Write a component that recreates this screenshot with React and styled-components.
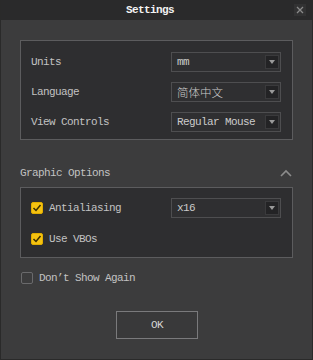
import React, { useState } from 'react';
import styled, { createGlobalStyle } from 'styled-components';

const GlobalStyle = createGlobalStyle`
  html, body {
    margin: 0;
    padding: 0;
    background: #3c3c3d;
  }
  * {
    box-sizing: border-box;
  }
`;

const mono = `"Liberation Mono", "Noto Sans CJK SC", monospace`;

const Dialog = styled.div`
  width: 313px;
  height: 360px;
  background: #3c3c3d;
  border: 1px solid #2a2a2a;
  border-top: none;
  display: flex;
  flex-direction: column;
  font-family: ${mono};
  font-size: 11px;
  letter-spacing: -0.6px;
  color: #c2c2c2;
`;

const TitleBar = styled.div`
  height: 20px;
  background: #2a2a2b;
  display: flex;
  align-items: center;
  justify-content: center;
  position: relative;
  padding-right: 13px;
  color: #f2f2f2;
  font-weight: bold;
`;

const CloseButton = styled.div`
  position: absolute;
  right: 6px;
  top: 4px;
  width: 12px;
  height: 12px;
  display: flex;
  align-items: center;
  justify-content: center;
  background: #323233;
`;

const Content = styled.div`
  padding: 20px 19px 0 19px;
  display: flex;
  flex-direction: column;
`;

const Group = styled.div`
  background: #2e2e30;
  border: 1px solid #5c5c5e;
  padding: ${(p) => p.$pad};
  display: flex;
  flex-direction: column;
  gap: ${(p) => p.$gap}px;
`;

const Row = styled.div`
  height: 20px;
  display: flex;
  align-items: center;
  justify-content: space-between;
`;

const Label = styled.span`
  line-height: 20px;
`;

const SelectBox = styled.div`
  width: 110px;
  height: 20px;
  border: 1px solid #4e4e50;
  background: #2f2f31;
  display: flex;
  align-items: center;
  justify-content: space-between;
  padding: 0 1px 0 5px;
  color: #cbcbcb;
`;

const SelectText = styled.span`
  font-size: ${(p) => (p.$cjk ? '11.5px' : '11px')};
  letter-spacing: ${(p) => (p.$cjk ? '0' : '-0.6px')};
  font-weight: ${(p) => (p.$cjk ? 300 : 'normal')};
`;

const ArrowButton = styled.div`
  width: 14px;
  height: 14px;
  background: #232325;
  border: 1px solid #3a3a3c;
  display: flex;
  align-items: center;
  justify-content: center;
`;

const SectionHeader = styled.div`
  height: 20px;
  margin: 23px 0 4px;
  display: flex;
  align-items: center;
  justify-content: space-between;
  padding-right: 1px;
`;

const CheckRow = styled.label`
  display: flex;
  align-items: center;
  gap: 6px;
  height: 20px;
  cursor: pointer;
`;

const CheckBox = styled.span`
  width: 12px;
  height: 12px;
  border-radius: 2px;
  display: flex;
  align-items: center;
  justify-content: center;
  background: ${(p) => (p.$checked ? '#f5c211' : 'transparent')};
  border: 1px solid ${(p) => (p.$checked ? '#e0ad00' : '#6a6a6c')};
  flex-shrink: 0;
`;

const FreeRow = styled.div`
  margin-top: 10px;
  padding-left: 1px;
`;

const Footer = styled.div`
  display: flex;
  justify-content: center;
  margin-top: 23px;
  padding-left: 1px;
`;

const OkButton = styled.button`
  width: 82px;
  height: 28px;
  background: #39393a;
  border: 1px solid #7a7a7c;
  color: #d6d6d6;
  font-family: ${mono};
  font-size: 11px;
  letter-spacing: -0.6px;
  cursor: pointer;
`;

const Arrow = () => (
  <svg width="6" height="4" viewBox="0 0 6 4">
    <path d="M0 0 H6 L3 4 Z" fill="#9a9a9a" />
  </svg>
);

const Select = ({ value, cjk }) => (
  <SelectBox>
    <SelectText $cjk={cjk}>{value}</SelectText>
    <ArrowButton>
      <Arrow />
    </ArrowButton>
  </SelectBox>
);

const Check = ({ checked, onToggle, children }) => (
  <CheckRow onClick={onToggle}>
    <CheckBox $checked={checked}>
      {checked && (
        <svg width="10" height="10" viewBox="0 0 10 10">
          <path d="M1.5 5 L4 7.5 L8.5 2" stroke="#3a2e00" strokeWidth="1.5" fill="none" />
        </svg>
      )}
    </CheckBox>
    <Label>{children}</Label>
  </CheckRow>
);

const App = () => {
  const [aa, setAa] = useState(true);
  const [vbo, setVbo] = useState(true);
  const [dontShow, setDontShow] = useState(false);

  return (
    <>
      <GlobalStyle />
      <Dialog>
        <TitleBar>
          Settings
          <CloseButton>
            <svg width="8" height="8" viewBox="0 0 8 8">
              <path d="M1 1 L7 7 M7 1 L1 7" stroke="#8a8a8a" strokeWidth="1.3" />
            </svg>
          </CloseButton>
        </TitleBar>
        <Content>
          <Group $pad="11px 11px 7px 10px" $gap={10}>
            <Row>
              <Label>Units</Label>
              <Select value="mm" />
            </Row>
            <Row>
              <Label>Language</Label>
              <Select value="简体中文" cjk />
            </Row>
            <Row>
              <Label>View Controls</Label>
              <Select value="Regular Mouse" />
            </Row>
          </Group>

          <SectionHeader>
            <Label>Graphic Options</Label>
            <svg width="12" height="8" viewBox="0 0 12 8">
              <path d="M1 7 L6 2 L11 7" stroke="#8c8c8c" strokeWidth="1.6" fill="none" />
            </svg>
          </SectionHeader>

          <Group $pad="10px 11px 8px 10px" $gap={11}>
            <Row>
              <Check checked={aa} onToggle={() => setAa(!aa)}>Antialiasing</Check>
              <Select value="x16" />
            </Row>
            <Row>
              <Check checked={vbo} onToggle={() => setVbo(!vbo)}>Use VBOs</Check>
            </Row>
          </Group>

          <FreeRow>
            <Check checked={dontShow} onToggle={() => setDontShow(!dontShow)}>Don’t Show Again</Check>
          </FreeRow>

          <Footer>
            <OkButton>OK</OkButton>
          </Footer>
        </Content>
      </Dialog>
    </>
  );
};

export default App;
